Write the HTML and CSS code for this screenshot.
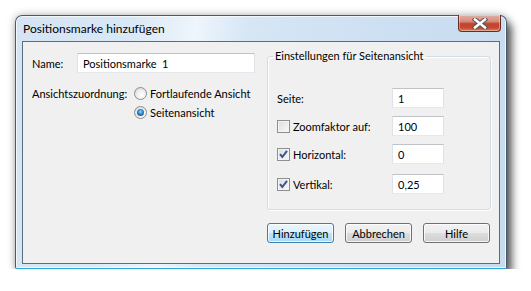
FILE: index.html
```html
<!DOCTYPE html>
<html lang="de">
<head>
    <meta charset="UTF-8">
    <meta name="viewport" content="width=device-width, initial-scale=1.0">
    <title>Positionsmarke hinzufügen</title>
    <link rel="stylesheet" href="styles.css">
</head>
<body>
    <div class="window">
        <div class="titlebar">
            <span class="title">Positionsmarke hinzufügen</span>
            <button class="close" aria-label="Schließen">
                <svg width="16" height="11" viewBox="0 0 16 11">
                    <path d="M3 1.5 L13 9.5 M13 1.5 L3 9.5" stroke="#4a4f55" stroke-width="4.4" stroke-linecap="square"/>
                    <path d="M3 1.5 L13 9.5 M13 1.5 L3 9.5" stroke="#ffffff" stroke-width="2.6" stroke-linecap="square"/>
                </svg>
            </button>
        </div>

        <div class="client">
            <div class="main">
                <div class="left">
                    <div class="name-row">
                        <span class="lbl name-lbl">Name:</span>
                        <input class="text name" type="text" value="Positionsmarke  1">
                    </div>
                    <div class="view-row">
                        <span class="lbl">Ansichtszuordnung:</span>
                        <div class="radios">
                            <label class="radio"><span class="dot"></span>Fortlaufende Ansicht</label>
                            <label class="radio on"><span class="dot"></span>Seitenansicht</label>
                        </div>
                    </div>
                </div>

                <fieldset class="group">
                    <legend>Einstellungen für Seitenansicht</legend>
                    <div class="field">
                        <span class="flbl">Seite:</span>
                        <input class="text small" type="text" value="1">
                    </div>
                    <div class="field">
                        <label class="flbl check"><span class="box"></span>Zoomfaktor auf:</label>
                        <input class="text small" type="text" value="100">
                    </div>
                    <div class="field">
                        <label class="flbl check on"><span class="box"><svg width="11" height="11" viewBox="0 0 11 11"><path d="M2 5.2 L4.3 8 L9 1.8" fill="none" stroke="#3d5494" stroke-width="2"/></svg></span>Horizontal:</label>
                        <input class="text small" type="text" value="0">
                    </div>
                    <div class="field last">
                        <label class="flbl check on"><span class="box"><svg width="11" height="11" viewBox="0 0 11 11"><path d="M2 5.2 L4.3 8 L9 1.8" fill="none" stroke="#3d5494" stroke-width="2"/></svg></span>Vertikal:</label>
                        <input class="text small" type="text" value="0,25">
                    </div>
                </fieldset>
            </div>

            <div class="buttons">
                <button class="btn default">Hinzufügen</button>
                <button class="btn">Abbrechen</button>
                <button class="btn">Hilfe</button>
            </div>
        </div>
    </div>
</body>
</html>
```

FILE: styles.css
```css
body {
    margin: 0;
    background: #ffffff;
    font-family: Lato, "Liberation Sans", sans-serif;
    font-size: 11px;
    color: #000;
}

.window {
    box-sizing: border-box;
    width: 492px;
    height: 254px;
    margin: 15px 0 0 15px;
    padding: 0 6px 5px 6px;
    border: 1px solid #4b5a6b;
    border-bottom-color: #2aa7d8;
    border-radius: 7px 7px 2px 2px;
    background: linear-gradient(100deg, #d4e4f4 0%, #d9e8f6 22%, #eef5fc 34%, #d6e6f5 44%, #cddff2 70%, #c8dcf0 100%);
    box-shadow: 5px 7px 9px rgba(0, 0, 0, 0.6), 0 0 8px rgba(0, 0, 0, 0.3), inset 0 0 0 1px rgba(255, 255, 255, 0.7);
}

.titlebar {
    height: 25px;
    display: flex;
    justify-content: space-between;
    align-items: flex-start;
}

.title {
    margin-top: 5px;
    padding-left: 1px;
    font-size: 12px;
}

.close {
    width: 43px;
    height: 17px;
    margin: -1px -1px 0 0;
    padding: 0;
    border: 1px solid #6e2a20;
    border-top: none;
    border-radius: 0 0 4px 4px;
    background: linear-gradient(#e4aea4 0%, #d58c7e 40%, #c2432c 55%, #c84a32 80%, #da7d5e 100%);
    box-shadow: inset 0 0 0 1px rgba(255, 255, 255, 0.35);
    display: flex;
    align-items: center;
    justify-content: center;
}

.client {
    box-sizing: border-box;
    height: 223px;
    background: #f0f0f0;
    border: 1px solid #5e6b79;
    padding: 6px 8px 0 9px;
}

.main {
    display: flex;
}

.left {
    width: 223px;
    flex: none;
    padding-top: 5px;
}

.name-row {
    display: flex;
    align-items: center;
}

.name-lbl {
    width: 45px;
}

.text {
    box-sizing: border-box;
    height: 20px;
    margin: 0;
    padding: 0 5px;
    font-family: inherit;
    font-size: 11px;
    color: #000;
    background: #fff;
    border: 1px solid;
    border-color: #bfc3c8 #dfe3e8 #e5e9ee #dfe3e8;
    outline: none;
}

.name {
    width: 178px;
}

.view-row {
    display: flex;
    margin-top: 11px;
}

.view-row .lbl {
    width: 102px;
    flex: none;
    line-height: 19px;
}

.radios {
    flex: none;
    white-space: nowrap;
}

.radio {
    display: flex;
    align-items: center;
    height: 19px;
}

.dot {
    box-sizing: border-box;
    width: 13px;
    height: 13px;
    margin-right: 3px;
    border: 1px solid #8a8f95;
    border-radius: 50%;
    background: radial-gradient(circle at 60% 65%, #ffffff 0%, #f0f0f0 45%, #c9cdd2 100%);
    display: flex;
    align-items: center;
    justify-content: center;
}

.radio.on .dot::after {
    content: "";
    width: 7px;
    height: 7px;
    border-radius: 50%;
    background: radial-gradient(circle at 50% 40%, #9ad8fa 0%, #2d82c6 45%, #0f3f7a 100%);
}

.group {
    box-sizing: border-box;
    width: 224px;
    height: 162px;
    flex: none;
    margin: 0 0 0 12px;
    padding: 24px 9px 0 9px;
    border: 1px solid #d3dce3;
    border-radius: 3px;
    box-shadow: inset 1px 1px 0 #fff, 1px 1px 0 #fff;
}

.group legend {
    margin-left: -4px;
    padding: 0 2px;
    line-height: 16px;
}

.field {
    display: flex;
    align-items: center;
    margin-bottom: 8px;
}

.field:nth-of-type(3) {
    margin-bottom: 10px;
}

.flbl {
    width: 115px;
}

.small {
    width: 52px;
}

.check {
    display: flex;
    align-items: center;
}

.box {
    box-sizing: border-box;
    width: 13px;
    height: 13px;
    margin-right: 3px;
    border: 1px solid #8e8f8f;
    background: linear-gradient(135deg, #dcdcdc 0%, #eeeeee 60%, #f8f8f8 100%);
    box-shadow: inset 0 0 0 1px #f4f4f4;
    display: flex;
    align-items: center;
    justify-content: center;
}

.buttons {
    display: flex;
    justify-content: flex-end;
    gap: 11px;
    margin-top: 13px;
    padding-right: 1px;
}

.btn {
    box-sizing: border-box;
    width: 67px;
    height: 20px;
    padding: 0;
    font-family: inherit;
    font-size: 11px;
    color: #000;
    border: 1px solid #707070;
    border-radius: 3px;
    background: linear-gradient(#f2f2f2 0%, #ebebeb 50%, #dddddd 51%, #cfcfcf 100%);
    box-shadow: inset 0 0 0 1px rgba(255, 255, 255, 0.8);
}

.btn.default {
    border-color: #3c7fb1;
    background: linear-gradient(#eaf6fd 0%, #d9f0fc 50%, #bee6fd 51%, #a7d9f5 100%);
}
```
